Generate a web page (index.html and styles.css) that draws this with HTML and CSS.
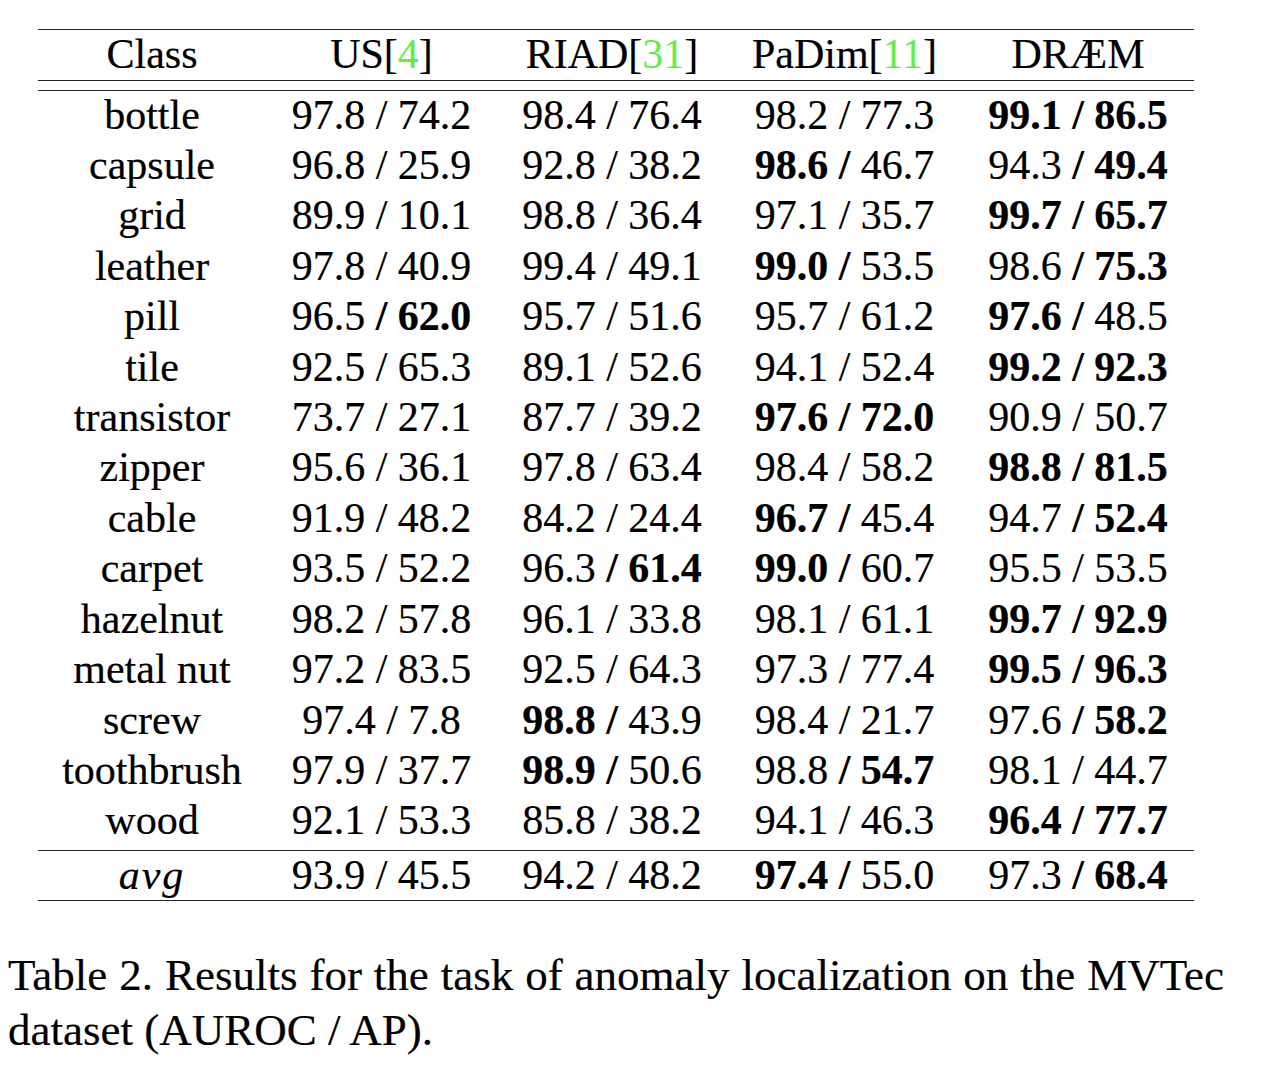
FILE: index.html
```html
<!DOCTYPE html>
<html>
<head>
<meta charset="utf-8">
<link rel="stylesheet" href="styles.css">
</head>
<body>
<div class="page">
  <div class="tbl">
    <div class="row head">
      <div>Class</div>
      <div>US[<span class="cite">4</span>]</div>
      <div>RIAD[<span class="cite">31</span>]</div>
      <div>PaDim[<span class="cite">11</span>]</div>
      <div>DRÆM</div>
    </div>
    <div class="body">
      <div class="row"><div>bottle</div><div>97.8 / 74.2</div><div>98.4 / 76.4</div><div>98.2 / 77.3</div><div><b>99.1 / 86.5</b></div></div>
      <div class="row"><div>capsule</div><div>96.8 / 25.9</div><div>92.8 / 38.2</div><div><b>98.6 /</b> 46.7</div><div>94.3 <b>/ 49.4</b></div></div>
      <div class="row"><div>grid</div><div>89.9 / 10.1</div><div>98.8 / 36.4</div><div>97.1 / 35.7</div><div><b>99.7 / 65.7</b></div></div>
      <div class="row"><div>leather</div><div>97.8 / 40.9</div><div>99.4 / 49.1</div><div><b>99.0 /</b> 53.5</div><div>98.6 <b>/ 75.3</b></div></div>
      <div class="row"><div>pill</div><div>96.5 <b>/ 62.0</b></div><div>95.7 / 51.6</div><div>95.7 / 61.2</div><div><b>97.6 /</b> 48.5</div></div>
      <div class="row"><div>tile</div><div>92.5 / 65.3</div><div>89.1 / 52.6</div><div>94.1 / 52.4</div><div><b>99.2 / 92.3</b></div></div>
      <div class="row"><div>transistor</div><div>73.7 / 27.1</div><div>87.7 / 39.2</div><div><b>97.6 / 72.0</b></div><div>90.9 / 50.7</div></div>
      <div class="row"><div>zipper</div><div>95.6 / 36.1</div><div>97.8 / 63.4</div><div>98.4 / 58.2</div><div><b>98.8 / 81.5</b></div></div>
      <div class="row"><div>cable</div><div>91.9 / 48.2</div><div>84.2 / 24.4</div><div><b>96.7 /</b> 45.4</div><div>94.7 <b>/ 52.4</b></div></div>
      <div class="row"><div>carpet</div><div>93.5 / 52.2</div><div>96.3 <b>/ 61.4</b></div><div><b>99.0 /</b> 60.7</div><div>95.5 / 53.5</div></div>
      <div class="row"><div>hazelnut</div><div>98.2 / 57.8</div><div>96.1 / 33.8</div><div>98.1 / 61.1</div><div><b>99.7 / 92.9</b></div></div>
      <div class="row"><div>metal nut</div><div>97.2 / 83.5</div><div>92.5 / 64.3</div><div>97.3 / 77.4</div><div><b>99.5 / 96.3</b></div></div>
      <div class="row"><div>screw</div><div>97.4 / 7.8</div><div><b>98.8 /</b> 43.9</div><div>98.4 / 21.7</div><div>97.6 <b>/ 58.2</b></div></div>
      <div class="row"><div>toothbrush</div><div>97.9 / 37.7</div><div><b>98.9 /</b> 50.6</div><div>98.8 <b>/ 54.7</b></div><div>98.1 / 44.7</div></div>
      <div class="row"><div>wood</div><div>92.1 / 53.3</div><div>85.8 / 38.2</div><div>94.1 / 46.3</div><div><b>96.4 / 77.7</b></div></div>
    </div>
    <div class="row avg">
      <div><i>avg</i></div><div>93.9 / 45.5</div><div>94.2 / 48.2</div><div><b>97.4 /</b> 55.0</div><div>97.3 <b>/ 68.4</b></div>
    </div>
  </div>
  <p class="caption">Table 2. Results for the task of anomaly localization on the MVTec dataset (AUROC / AP).</p>
</div>
</body>
</html>
```

FILE: styles.css
```css
html, body {
  margin: 0;
  padding: 0;
  background: #ffffff;
}

body {
  font-family: "Liberation Serif", "Times New Roman", serif;
  color: #000000;
}

.page {
  padding: 29px 0 0 8px;
}

.tbl {
  margin-left: 30px;
  width: 1156px;
  border-top: 1.5px solid #222222;
  border-bottom: 1.5px solid #222222;
  font-size: 42px;
  -webkit-text-stroke: 0.2px #000000;
}

.row {
  box-sizing: border-box;
  display: grid;
  grid-template-columns: 228px 231px 230px 235px 232px;
  align-items: center;
  text-align: center;
  height: 50.43px;
  padding-bottom: 4px;
  white-space: nowrap;
}

.head {
  height: 51px;
  padding-bottom: 12px;
  border-bottom: 1.5px solid #222222;
}

.body {
  margin-top: 8.5px;
  padding-bottom: 3.5px;
  border-top: 1.5px solid #222222;
  border-bottom: 1.5px solid #222222;
}

.avg {
  height: 49px;
  padding-bottom: 11px;
}

.avg i {
  font-style: italic;
  letter-spacing: 2px;
}

.cite {
  color: #62ee46;
  -webkit-text-stroke: 0;
}

b {
  font-weight: bold;
}

.caption {
  margin: 47px 0 0 0;
  width: 1216px;
  font-size: 45px;
  line-height: 55px;
  text-align: justify;
  -webkit-text-stroke: 0.2px #000000;
}
```
